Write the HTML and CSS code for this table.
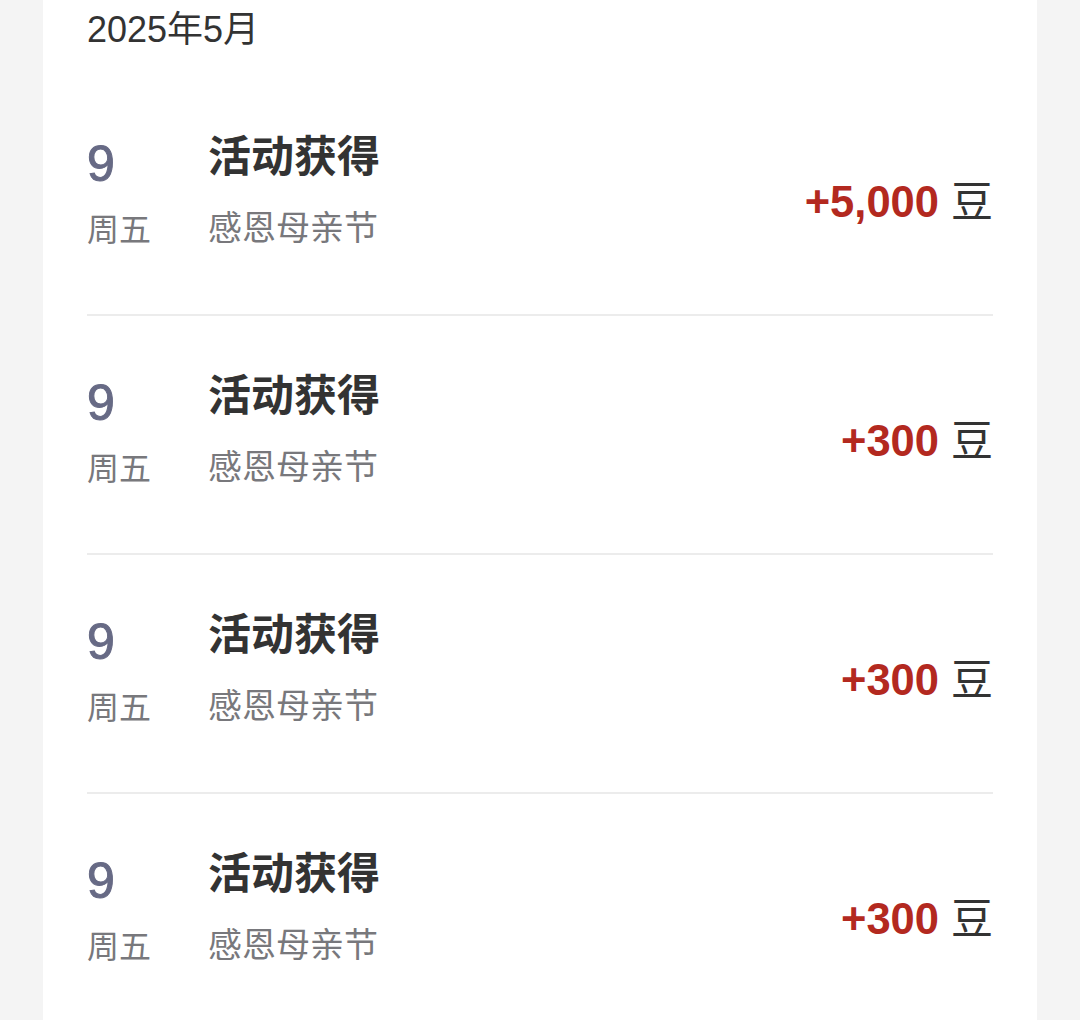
FILE: index.html
```html
<!DOCTYPE html>
<html lang="zh-CN">
<head>
<meta charset="utf-8">
<title>豆明细</title>
<link rel="stylesheet" href="styles.css">
</head>
<body>
<div class="card">
  <div class="month">2025年5月</div>
  <div class="row">
    <div class="date">
      <div class="day">9</div>
      <div class="week">周五</div>
    </div>
    <div class="info">
      <div class="title">活动获得</div>
      <div class="sub">感恩母亲节</div>
    </div>
    <div class="amount"><span class="num">+5,000</span><span class="unit">豆</span></div>
  </div>
  <div class="row">
    <div class="date">
      <div class="day">9</div>
      <div class="week">周五</div>
    </div>
    <div class="info">
      <div class="title">活动获得</div>
      <div class="sub">感恩母亲节</div>
    </div>
    <div class="amount"><span class="num">+300</span><span class="unit">豆</span></div>
  </div>
  <div class="row">
    <div class="date">
      <div class="day">9</div>
      <div class="week">周五</div>
    </div>
    <div class="info">
      <div class="title">活动获得</div>
      <div class="sub">感恩母亲节</div>
    </div>
    <div class="amount"><span class="num">+300</span><span class="unit">豆</span></div>
  </div>
  <div class="row">
    <div class="date">
      <div class="day">9</div>
      <div class="week">周五</div>
    </div>
    <div class="info">
      <div class="title">活动获得</div>
      <div class="sub">感恩母亲节</div>
    </div>
    <div class="amount"><span class="num">+300</span><span class="unit">豆</span></div>
  </div>
</div>
</body>
</html>
```

FILE: styles.css
```css
html, body {
  margin: 0;
  padding: 0;
  background: #f4f4f4;
}

body {
  font-family: "Liberation Sans", "Noto Sans CJK SC", sans-serif;
  color: #333333;
}

.card {
  margin: 0 43px;
  background: #ffffff;
  padding: 6px 44px 0;
  min-height: 1100px;
  box-sizing: border-box;
}

.month {
  font-size: 36px;
  line-height: 48px;
  height: 48px;
  color: #333333;
  margin-bottom: 23px;
}

.row {
  display: flex;
  align-items: flex-start;
  height: 237px;
  border-bottom: 2px solid #ececec;
}

.date {
  width: 121px;
  flex: none;
  padding-top: 59px;
}

.day {
  font-size: 50px;
  line-height: 56px;
  height: 56px;
  color: #676a85;
  -webkit-text-stroke: 1px #676a85;
}

.week {
  margin-top: 18px;
  font-size: 32px;
  line-height: 40px;
  height: 40px;
  color: #78787c;
}

.info {
  flex: 1;
  padding-top: 52px;
}

.title {
  font-size: 43px;
  font-weight: 700;
  line-height: 56px;
  height: 56px;
  color: #333333;
}

.sub {
  margin-top: 21px;
  font-size: 34px;
  line-height: 44px;
  height: 44px;
  color: #78787c;
}

.amount {
  flex: none;
  padding-top: 97px;
  line-height: 56px;
  height: 56px;
  white-space: nowrap;
}

.num {
  font-size: 43.5px;
  font-weight: 700;
  color: #b3291f;
}

.unit {
  font-size: 42px;
  color: #333333;
  margin-left: 12px;
}
```
